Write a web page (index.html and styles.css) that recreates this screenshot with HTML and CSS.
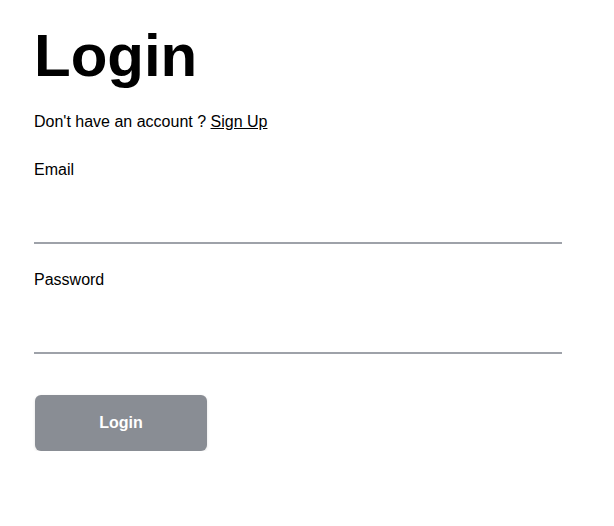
FILE: index.html
```html
<!DOCTYPE html>
<html lang="en">
<head>
<meta charset="utf-8">
<title>Login</title>
<link rel="stylesheet" href="styles.css">
</head>
<body>
<main class="page">
  <h1 class="title">Login</h1>
  <p class="signup">Don't have an account ? <a href="#" class="signup-link">Sign Up</a></p>
  <form class="form">
    <div class="field">
      <label class="field-label" for="email">Email</label>
      <input class="field-input" id="email" type="email">
    </div>
    <div class="field field-second">
      <label class="field-label" for="password">Password</label>
      <input class="field-input" id="password" type="password">
    </div>
    <button class="submit" type="button">Login</button>
  </form>
</main>
</body>
</html>
```
FILE: styles.css
```css
* { box-sizing: border-box; }
html, body { margin: 0; padding: 0; background: #fff; }
body {
  font-family: "Liberation Sans", Arial, sans-serif;
  font-size: 16px;
  color: #000;
}
.page {
  padding: 21px 0 0 34px;
  width: 562px;
}
.title {
  margin: 0;
  font-size: 60px;
  font-weight: 700;
  line-height: normal;
}
.signup {
  margin: 23px 0 0;
  line-height: normal;
}
.signup-link { color: #000; text-decoration: underline; }
.form {
  display: flex;
  flex-direction: column;
  margin-top: 30px;
}
.field { display: flex; flex-direction: column; }
.field-second { margin-top: 27px; }
.field-label { line-height: normal; }
.field-input {
  height: 65px;
  border: none;
  border-bottom: 2px solid #9ea2a9;
  outline: none;
  background: transparent;
  font: inherit;
  padding: 0;
}
.submit {
  align-self: flex-start;
  margin-top: 41px;
  margin-left: 1px;
  width: 172px;
  height: 56px;
  border: none;
  border-radius: 6px;
  background: #898d94;
  color: #fff;
  font-family: "Liberation Sans", Arial, sans-serif;
  font-size: 16px;
  font-weight: 700;
  box-shadow: 0 1px 3px rgba(0,0,0,0.12);
}
```
